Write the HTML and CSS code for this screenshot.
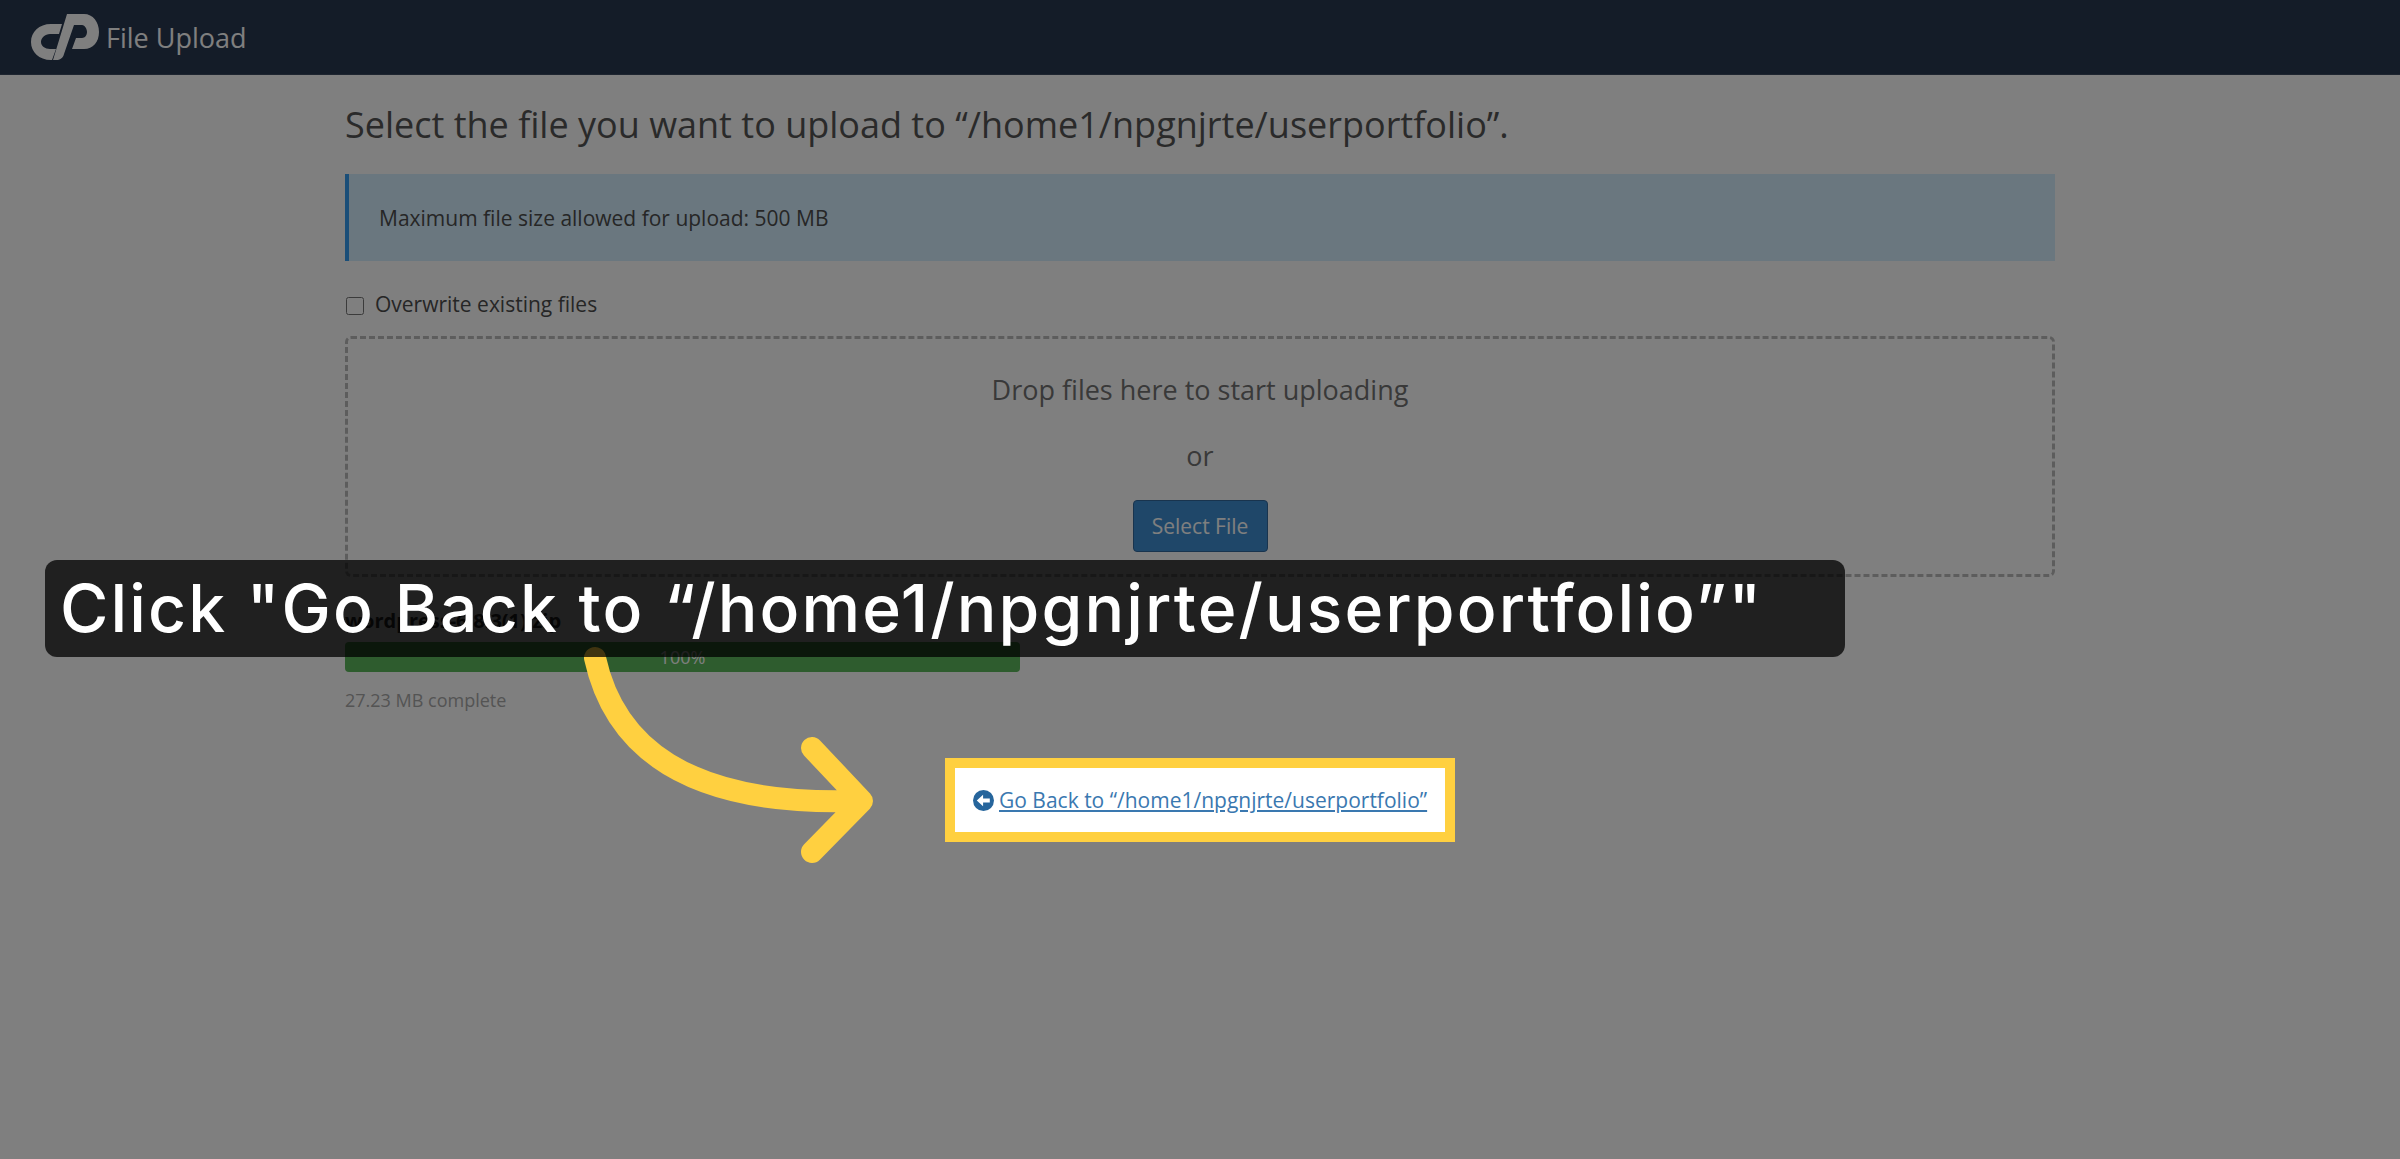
FILE: index.html
```html
<!DOCTYPE html>
<html lang="en">
<head>
<meta charset="utf-8">
<title>File Upload</title>
<link rel="stylesheet" href="styles.css">
</head>
<body>
<header class="topbar">
  <svg class="logo" viewBox="0 0 68 46" aria-hidden="true">
    <path d="M31 10H20C8 10 0 18 0 28S8 46 20 46h1l4-11h-6c-5 0-9-3-9-7s4-8 9-8h9z"/>
    <path d="M36 0H53C62 0 68 8 68 18S62 35 53 35H41L45 24H51C54 24 56 21 56 18S54 11 51 11H43L33 40C32 44 29 46 25 46H22Z"/>
  </svg>
  <span class="app-title">File Upload</span>
</header>
<main class="page">
  <h1 class="heading">Select the file you want to upload to “/home1/npgnjrte/userportfolio”.</h1>
  <div class="alert">Maximum file size allowed for upload: 500 MB</div>
  <label class="overwrite"><input class="check" type="checkbox">Overwrite existing files</label>
  <section class="dropzone">
    <p class="drop-text">Drop files here to start uploading</p>
    <p class="drop-or">or</p>
    <button class="select-btn" type="button">Select File</button>
  </section>
  <div class="file-name">wordpress-6.8.3(1).zip</div>
  <div class="progress">100%</div>
  <div class="complete">27.23 MB complete</div>
  <div class="back-row">
    <a class="back-link" href="#">
      <svg class="back-icon" viewBox="0 0 20 20" aria-hidden="true">
        <circle cx="10" cy="10" r="10"/>
        <path class="back-arrow" d="M3.6 10 9.6 4.6V8H16v4H9.6v3.4z"/>
      </svg>
      <span class="back-text">Go Back to “/home1/npgnjrte/userportfolio”</span>
    </a>
  </div>
</main>
<div class="dim"></div>
<svg class="pointer" viewBox="0 0 2400 1159" aria-hidden="true">
  <path d="M595 658C614 745 685 806 855 801M812 748l50 53-50 51" />
</svg>
<div class="callout">Click "Go Back to “/home1/npgnjrte/userportfolio”"</div>
</body>
</html>
```
FILE: styles.css
```css
* { box-sizing: border-box; }
html, body { margin: 0; height: 100%; }
body { background: #fff; font-family: "Open Sans", sans-serif; color: #4d4d4d; overflow: hidden; }

.topbar { height: 75px; background: #293850; border-bottom: 1px solid #3d4b60; display: flex; align-items: center; padding: 0 0 0 31px; gap: 7px; }
.logo { width: 68px; height: 46px; fill: #fff; display: block; }
.app-title { color: #fff; font-size: 27px; }

.page { width: 1710px; margin: 0 auto; }
.heading { font-weight: 400; font-size: 36px; line-height: 46px; margin: 27px 0 0; color: #555; }
.alert { margin-top: 26px; height: 87px; background: #d4eeff; border-left: 4px solid #349cf0; padding-left: 30px; display: flex; align-items: center; font-size: 21px; }
.overwrite { display: flex; align-items: center; margin-top: 23px; font-size: 21px; line-height: 40px; height: 40px; }
.check { width: 18px; height: 18px; margin: 3px 11px 0 1px; }

.dropzone { margin-top: 12px; height: 241px; border: 3px dashed #bbb; border-radius: 6px; display: flex; flex-direction: column; align-items: center; text-align: center; }
.drop-text { font-size: 27px; line-height: 36px; margin: 33px 0 0; color: #737373; }
.drop-or { font-size: 27px; line-height: 36px; margin: 30px 0 0; color: #737373; }
.select-btn { margin-top: 26px; width: 135px; height: 52px; background: #3f8fd2; border: 1px solid #33689c; border-radius: 4px; color: #fff; font: 21px "Open Sans", sans-serif; }

.file-name { margin-top: 28px; font-size: 20px; font-weight: 700; line-height: 32px; color: #333; }
.progress { margin-top: 5px; width: 675px; height: 30px; background: #5cb85c; border-radius: 4px; color: #fff; text-align: center; font-size: 18px; line-height: 30px; }
.complete { margin-top: 14px; font-size: 18px; line-height: 28px; color: #a8a8a8; }

.back-row { margin-top: 44px; display: flex; justify-content: center; position: relative; z-index: 2; }
.back-link { width: 510px; height: 84px; background: #fff; border: 10px solid #ffd040; padding-left: 18px; display: flex; align-items: center; color: #3a78b0; text-decoration: underline; font-size: 21px; }
.back-icon { width: 21px; height: 21px; fill: #26659c; flex: none; }
.back-arrow { fill: #fff; }
.back-text { margin-left: 5px; }

.dim { position: fixed; inset: 0; background: rgba(0, 0, 0, .5); z-index: 1; }
.pointer { position: fixed; inset: 0; width: 2400px; height: 1159px; z-index: 3; fill: none; stroke: #ffd040; stroke-width: 22px; stroke-linecap: round; stroke-linejoin: round; }
.callout { position: fixed; left: 45px; top: 560px; width: 1800px; height: 97px; padding-left: 15px; background: rgba(0, 0, 0, .75); border-radius: 12px; color: #fff; font: 500 66px/97px Inter, sans-serif; letter-spacing: 2.1px; white-space: nowrap; z-index: 4; }
```
